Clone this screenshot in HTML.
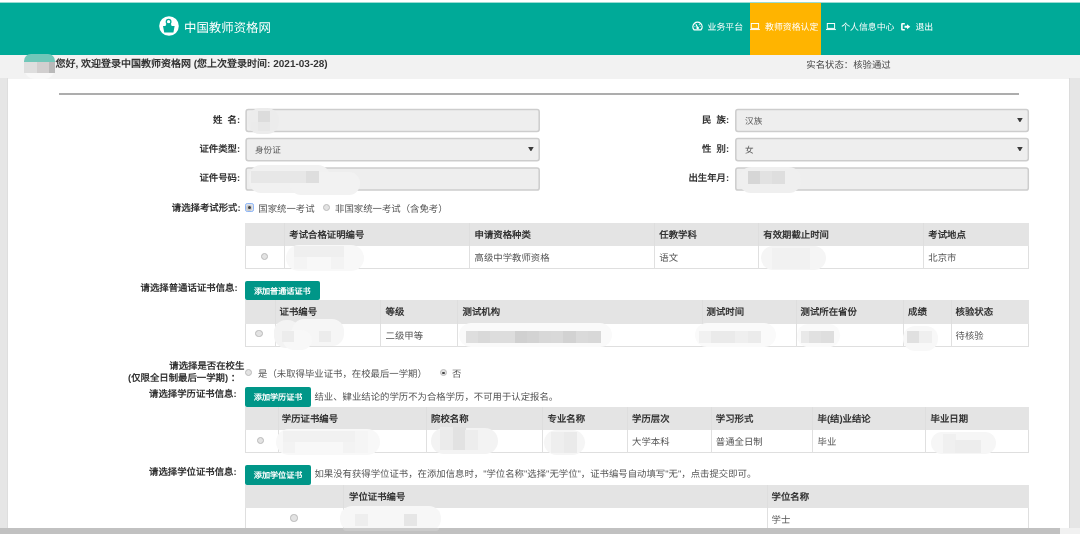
<!DOCTYPE html>
<html lang="zh-CN">
<head>
<meta charset="utf-8">
<title>中国教师资格网</title>
<style>
*{box-sizing:border-box;margin:0;padding:0}
html,body{width:1080px;height:534px;overflow:hidden;background:#fff}
body{position:relative;font-family:"Liberation Sans",sans-serif;font-size:9.4px;color:#333;line-height:1;text-rendering:geometricPrecision}
.abs{position:absolute}
#hdr{left:0;top:3px;width:1080px;height:52px;background:#00aa98}
#tab{left:750px;top:3px;width:71px;height:52px;background:#ffb400}
#sbar{left:0;top:55px;width:1080px;height:23.6px;background:#f2f2f2}
#lstrip{left:0;top:78px;width:8px;height:450px;background:#e6e6e6;border-right:1px solid #dedede}
#rstrip{left:1069.4px;top:78px;width:10.6px;height:450px;background:#e6e6e6;border-left:1px solid #dcdcdc}
#hr{left:59px;top:92.8px;width:960px;height:2.1px;background:#adadad}
#scroll{left:0;top:528px;width:1080px;height:6px;background:#f1f1f1}
#thumb{left:0;top:528px;width:1060px;height:6px;background:#c1c1c1}
.t{position:absolute;z-index:3;white-space:nowrap;text-align:justify;text-align-last:justify;line-height:12px;height:12px}
.b{font-weight:bold}
.w{color:#fff}
.nav{font-size:8.9px}
.lbl{font-weight:bold;color:#333}
.inp{position:absolute;height:23.3px;background:#eee;border:1px solid #ccc;border-radius:2px}
.g{color:#555}
.sm{font-size:8.6px;color:#555}
.arrow{position:absolute;width:0;height:0;border-left:3.1px solid transparent;border-right:3.1px solid transparent;border-top:4.8px solid #3a3a3a}
.btn{position:absolute;background:#009688;color:#fff;font-weight:bold;font-size:8.1px;text-align:center;border-radius:2px;overflow:hidden}
.th{position:absolute;background:#e4e4e4;height:23px}
.tr{position:absolute;background:#fff;height:23px;border:1px solid #dfdfdf;border-top:none}
.vl{position:absolute;width:1px;background:#e0e0e0}
.vh{position:absolute;width:1px;background:#dedede}
.rad{position:absolute;z-index:3;width:7.4px;height:7.4px;border-radius:50%;background:#e3e3e3;border:1px solid #bababa}
.rad.on:after{content:"";position:absolute;left:1.5px;top:1.5px;width:2.6px;height:2.6px;border-radius:50%;background:#444}
.mz{position:absolute}
.bl{position:absolute;background:#f6f6f6;border-radius:11px}
</style>
</head>
<body>
<div id="wrap" style="position:absolute;left:0;top:0;width:1080px;height:534px;will-change:transform">
<div class="abs" style="left:0;top:2px;width:1080px;height:1px;background:#9adcd3"></div>
<div id="hdr" class="abs"></div>
<div id="tab" class="abs"></div>
<div id="sbar" class="abs"></div>
<div id="lstrip" class="abs"></div>
<div id="rstrip" class="abs"></div>
<div id="hr" class="abs"></div>

<!-- logo -->
<svg class="abs" style="left:158.9px;top:15.6px" width="20" height="20" viewBox="0 0 20 20">
<circle cx="10" cy="10" r="9.8" fill="#fff"/>
<circle cx="9.6" cy="5.7" r="2.3" fill="none" stroke="#00aa98" stroke-width="1.3"/>
<path d="M6.6 10 C6.6 8 8 7.6 9.6 7.6 C11.2 7.6 12.6 8 12.6 10 Z" fill="#00aa98"/>
<path d="M4 9.9 H15.6 L14.4 16.6 H5.2 Z" fill="#00aa98"/>
</svg>
<div class="t w" style="left:184.09px;width:86.78px;top:20.9px;font-size:12.4px;line-height:14px;height:14px">中国教师资格网</div>

<!-- nav -->
<svg class="abs" style="left:691.5px;top:20.5px" width="11" height="11" viewBox="0 0 11 11">
<path d="M2.1 8.9 A4.6 4.6 0 1 1 8.9 8.9 Z" fill="none" stroke="#fff" stroke-width="1.3" stroke-linejoin="round"/>
<path d="M5.7 6.8 L3.9 3.3" stroke="#fff" stroke-width="1.2" fill="none"/>
<circle cx="5.7" cy="6.9" r="1.25" fill="#fff"/>
<circle cx="7.3" cy="3.6" r="0.55" fill="#fff"/>
<circle cx="2.9" cy="5.6" r="0.5" fill="#fff"/>
<circle cx="8.2" cy="5.6" r="0.5" fill="#fff"/>
</svg>
<div class="t w nav" style="left:707.50px;width:35.55px;top:21.4px">业务平台</div>

<svg class="abs" style="left:750px;top:23px" width="11" height="8" viewBox="0 0 11 8">
<rect x="1.3" y="0.5" width="7.3" height="4.9" fill="none" stroke="#fff" stroke-width="0.95"/>
<rect x="0" y="6.1" width="9.9" height="0.95" fill="#fff"/>
</svg>
<div class="t w nav" style="left:765.00px;width:53.30px;top:21.4px">教师资格认定</div>

<svg class="abs" style="left:825.5px;top:23px" width="11" height="8" viewBox="0 0 11 8">
<rect x="1.3" y="0.5" width="7.3" height="4.9" fill="none" stroke="#fff" stroke-width="0.95"/>
<rect x="0" y="6.1" width="9.9" height="0.95" fill="#fff"/>
</svg>
<div class="t w nav" style="left:841.19px;width:53.30px;top:21.4px">个人信息中心</div>

<svg class="abs" style="left:900.5px;top:22.7px" width="10" height="8" viewBox="0 0 10 8">
<path d="M3.8 0.8 H1.4 Q0.9 0.8 0.9 1.3 V6.2 Q0.9 6.7 1.4 6.7 H3.8" fill="none" stroke="#fff" stroke-width="1.6"/>
<path d="M3.5 2.75 H6 V1.2 L9.3 3.75 L6 6.3 V4.75 H3.5 Z" fill="#fff"/>
</svg>
<div class="t w nav" style="left:915.39px;width:17.80px;top:21.4px">退出</div>

<!-- status bar -->
<div class="bl" style="left:24.4px;top:60px;width:30.6px;height:18.5px;background:#f8f8f8;border-radius:0 0 11px 11px"></div>
<div class="mz" style="left:24.4px;top:53.8px;width:30.6px;height:8px;background:#70c7b9;border-radius:7px 7px 0 0"></div>
<div class="mz" style="left:24.4px;top:61.5px;width:12.6px;height:11.5px;background:#dedede"></div>
<div class="mz" style="left:37px;top:61.5px;width:12px;height:11.5px;background:#d1cfcf"></div>
<div class="mz" style="left:49px;top:61.5px;width:6px;height:11.5px;background:#b9b9b9"></div>
<div class="t b" style="left:55.39px;width:272.32px;top:58.6px;font-size:10px;color:#333">您好, 欢迎登录中国教师资格网 (您上次登录时间: 2021-03-28)</div>
<div class="t" style="left:806.30px;width:84.44px;top:59px;font-size:9.4px;color:#444">实名状态：核验通过</div>

<!-- form left -->
<svg class="abs" style="left:0;top:100px" width="1080" height="100" viewBox="0 100 1080 100">
<g fill="#eeeeee" stroke="#cdcdcd" stroke-width="1.5">
<rect x="246.1" y="109.5" width="293.1" height="22" rx="2.2"/>
<rect x="246.1" y="138.5" width="293.1" height="22.2" rx="2.2"/>
<rect x="246.1" y="168.1" width="293.1" height="22" rx="2.2"/>
<rect x="735.8" y="109.5" width="292.5" height="22" rx="2.2"/>
<rect x="735.8" y="138.5" width="292.5" height="22.2" rx="2.2"/>
<rect x="735.8" y="168.1" width="292.5" height="22" rx="2.2"/>
</g>
</svg>
<div class="t lbl" style="left:212.91px;width:27.14px;top:113.5px">姓&nbsp;&nbsp;名:</div>
<div class="t lbl" style="left:199.38px;width:40.67px;top:142.5px">证件类型:</div>
<div class="t sm" style="left:255.00px;width:25.85px;top:144px">身份证</div>
<svg class="abs" style="left:528.2px;top:146.65px;z-index:3" width="5.8" height="4.8" viewBox="0 0 5.8 4.8"><path d="M0.1 0.1 H5.7 L2.9 4.7 Z" fill="#3a3a3a"/></svg>
<div class="t lbl" style="left:199.38px;width:40.67px;top:171.5px">证件号码:</div>

<!-- form right -->
<div class="t lbl" style="left:701.91px;width:27.14px;top:113.5px">民&nbsp;&nbsp;族:</div>
<div class="t sm" style="left:745.00px;width:17.25px;top:115px">汉族</div>
<svg class="abs" style="left:1016.9px;top:117.65px;z-index:3" width="5.8" height="4.8" viewBox="0 0 5.8 4.8"><path d="M0.1 0.1 H5.7 L2.9 4.7 Z" fill="#3a3a3a"/></svg>
<div class="t lbl" style="left:701.91px;width:27.14px;top:142.5px">性&nbsp;&nbsp;别:</div>
<div class="t sm" style="left:745.00px;width:8.66px;top:144px">女</div>
<svg class="abs" style="left:1016.9px;top:146.65px;z-index:3" width="5.8" height="4.8" viewBox="0 0 5.8 4.8"><path d="M0.1 0.1 H5.7 L2.9 4.7 Z" fill="#3a3a3a"/></svg>
<div class="t lbl" style="left:688.38px;width:40.67px;top:171.5px">出生年月:</div>

<!-- exam type -->
<div class="t lbl" style="left:171.75px;width:68.80px;top:202px">请选择考试形式:</div>
<div class="abs" style="left:244.8px;top:203.2px;width:9.2px;height:9px;border:1.2px solid #8db5f6;border-radius:2.2px;background:#dfe3ea;z-index:3"></div>
<div class="abs" style="left:246.4px;top:204.7px;width:6px;height:6px;border-radius:50%;background:#c9c9c9;z-index:3"></div>
<div class="abs" style="left:247.7px;top:206px;width:3.4px;height:3.4px;border-radius:50%;background:#3c3c3c;z-index:3"></div>
<div class="t g" style="left:258.30px;width:56.32px;top:202.6px">国家统一考试</div>
<div class="rad" style="left:322.5px;top:203.5px"></div>
<div class="t g" style="left:335.00px;width:112.57px;top:202.5px">非国家统一考试（含免考）</div>

<!-- table 1 -->
<div class="th" style="left:245px;top:223px;width:783.5px"></div>
<div class="tr" style="left:245px;top:246px;width:783.5px"></div>
<div class="vh" style="left:284px;top:223px;height:23px"></div><div class="vl" style="left:284px;top:246px;height:23px"></div>
<div class="vh" style="left:469px;top:223px;height:23px"></div><div class="vl" style="left:469px;top:246px;height:23px"></div>
<div class="vh" style="left:654px;top:223px;height:23px"></div><div class="vl" style="left:654px;top:246px;height:23px"></div>
<div class="vh" style="left:758px;top:223px;height:23px"></div><div class="vl" style="left:758px;top:246px;height:23px"></div>
<div class="vh" style="left:923px;top:223px;height:23px"></div><div class="vl" style="left:923px;top:246px;height:23px"></div>
<div class="t b" style="left:289.30px;width:75.07px;top:229px">考试合格证明编号</div>
<div class="t b" style="left:474.50px;width:56.32px;top:229px">申请资格种类</div>
<div class="t b" style="left:659.30px;width:37.57px;top:229px">任教学科</div>
<div class="t b" style="left:763.30px;width:65.69px;top:229px">有效期截止时间</div>
<div class="t b" style="left:928.30px;width:37.57px;top:229px">考试地点</div>
<div class="rad" style="left:261px;top:252.5px"></div>
<div class="t g" style="left:474.50px;width:75.07px;top:252px">高级中学教师资格</div>
<div class="t g" style="left:659.30px;width:18.82px;top:252px">语文</div>
<div class="t g" style="left:928.30px;width:28.19px;top:252px">北京市</div>

<!-- putonghua -->
<div class="t lbl" style="left:140.62px;width:96.92px;top:281.5px">请选择普通话证书信息:</div>
<div class="btn" style="left:245px;top:281px;width:74.5px;height:19.4px;line-height:21.4px">添加普通话证书</div>
<div class="th" style="left:245px;top:300.4px;width:783.5px;height:23.6px"></div>
<div class="tr" style="left:245px;top:324px;width:783.5px"></div>
<div class="vh" style="left:274.5px;top:300.4px;height:23.6px"></div><div class="vl" style="left:274.5px;top:324px;height:23px"></div>
<div class="vh" style="left:380px;top:300.4px;height:23.6px"></div><div class="vl" style="left:380px;top:324px;height:23px"></div>
<div class="vh" style="left:457.2px;top:300.4px;height:23.6px"></div><div class="vl" style="left:457.2px;top:324px;height:23px"></div>
<div class="vh" style="left:701.5px;top:300.4px;height:23.6px"></div><div class="vl" style="left:701.5px;top:324px;height:23px"></div>
<div class="vh" style="left:795.5px;top:300.4px;height:23.6px"></div><div class="vl" style="left:795.5px;top:324px;height:23px"></div>
<div class="vh" style="left:903px;top:300.4px;height:23.6px"></div><div class="vl" style="left:903px;top:324px;height:23px"></div>
<div class="vh" style="left:950.5px;top:300.4px;height:23.6px"></div><div class="vl" style="left:950.5px;top:324px;height:23px"></div>
<div class="t b" style="left:279.50px;width:37.57px;top:306.4px">证书编号</div>
<div class="t b" style="left:385.50px;width:18.82px;top:306.4px">等级</div>
<div class="t b" style="left:462.50px;width:37.57px;top:306.4px">测试机构</div>
<div class="t b" style="left:706.50px;width:37.57px;top:306.4px">测试时间</div>
<div class="t b" style="left:800.50px;width:56.32px;top:306.4px">测试所在省份</div>
<div class="t b" style="left:908.00px;width:18.82px;top:306.4px">成绩</div>
<div class="t b" style="left:955.50px;width:37.57px;top:306.4px">核验状态</div>
<div class="rad" style="left:255.4px;top:329.6px"></div>
<div class="t g" style="left:385.50px;width:37.57px;top:329.8px">二级甲等</div>
<div class="t g" style="left:955.50px;width:28.19px;top:329.8px">待核验</div>

<!-- in school -->
<div class="t lbl" style="left:169.28px;width:75.07px;top:359.7px">请选择是否在校生</div>
<div class="t lbl" style="left:128.02px;width:112.03px;top:372.3px">(仅限全日制最后一学期) ：</div>
<div class="rad" style="left:244.8px;top:369px"></div>
<div class="t g" style="left:258.00px;width:168.82px;top:367.5px">是（未取得毕业证书，在校最后一学期）</div>
<div class="rad on" style="left:439.8px;top:369px"></div>
<div class="t g" style="left:452.00px;width:9.44px;top:367.5px">否</div>

<!-- xueli -->
<div class="t lbl" style="left:149.09px;width:87.55px;top:388.2px">请选择学历证书信息:</div>
<div class="btn" style="left:245px;top:387.2px;width:66.2px;height:20.1px;line-height:22px">添加学历证书</div>
<div class="t g" style="left:314.39px;width:243.82px;top:390.6px">结业、肄业结论的学历不为合格学历，不可用于认定报名。</div>
<div class="th" style="left:245px;top:407.3px;width:783.5px;height:22.9px"></div>
<div class="tr" style="left:245px;top:430.2px;width:783.5px;height:22.8px"></div>
<div class="vh" style="left:277.7px;top:407.3px;height:22.9px"></div><div class="vl" style="left:277.7px;top:430.2px;height:22.4px"></div>
<div class="vh" style="left:426px;top:407.3px;height:22.9px"></div><div class="vl" style="left:426px;top:430.2px;height:22.4px"></div>
<div class="vh" style="left:542.3px;top:407.3px;height:22.9px"></div><div class="vl" style="left:542.3px;top:430.2px;height:22.4px"></div>
<div class="vh" style="left:626.8px;top:407.3px;height:22.9px"></div><div class="vl" style="left:626.8px;top:430.2px;height:22.4px"></div>
<div class="vh" style="left:710.6px;top:407.3px;height:22.9px"></div><div class="vl" style="left:710.6px;top:430.2px;height:22.4px"></div>
<div class="vh" style="left:812.4px;top:407.3px;height:22.9px"></div><div class="vl" style="left:812.4px;top:430.2px;height:22.4px"></div>
<div class="vh" style="left:925.2px;top:407.3px;height:22.9px"></div><div class="vl" style="left:925.2px;top:430.2px;height:22.4px"></div>
<div class="t b" style="left:281.80px;width:56.32px;top:413.4px">学历证书编号</div>
<div class="t b" style="left:431.00px;width:37.57px;top:413.4px">院校名称</div>
<div class="t b" style="left:547.50px;width:37.57px;top:413.4px">专业名称</div>
<div class="t b" style="left:632.00px;width:37.57px;top:413.4px">学历层次</div>
<div class="t b" style="left:715.80px;width:37.57px;top:413.4px">学习形式</div>
<div class="t b" style="left:817.50px;width:53.17px;top:413.4px">毕(结)业结论</div>
<div class="t b" style="left:930.50px;width:37.57px;top:413.4px">毕业日期</div>
<div class="rad" style="left:257px;top:436.5px"></div>
<div class="t g" style="left:632.00px;width:37.57px;top:436.4px">大学本科</div>
<div class="t g" style="left:715.80px;width:46.94px;top:436.4px">普通全日制</div>
<div class="t g" style="left:817.50px;width:18.82px;top:436.4px">毕业</div>

<!-- xuewei -->
<div class="t lbl" style="left:149.09px;width:87.55px;top:466px">请选择学位证书信息:</div>
<div class="btn" style="left:245px;top:464.8px;width:66.2px;height:20.2px;line-height:22px">添加学位证书</div>
<div class="t g" style="left:314.39px;width:441.91px;top:468.2px">如果没有获得学位证书，在添加信息时，"学位名称"选择"无学位"，证书编号自动填写"无"，点击提交即可。</div>
<div class="th" style="left:245px;top:485px;width:783.5px;height:23px"></div>
<div class="tr" style="left:245px;top:508px;width:783.5px;height:23px"></div>
<div class="vh" style="left:343px;top:485px;height:23px"></div><div class="vl" style="left:343px;top:508px;height:20px"></div>
<div class="vh" style="left:766.5px;top:485px;height:23px"></div><div class="vl" style="left:766.5px;top:508px;height:20px"></div>
<div class="t b" style="left:349.00px;width:56.32px;top:490.5px">学位证书编号</div>
<div class="t b" style="left:771.50px;width:37.57px;top:490.5px">学位名称</div>
<div class="rad" style="left:290.4px;top:514.3px"></div>
<div class="t g" style="left:771.50px;width:18.82px;top:513.5px">学士</div>
<!-- smudges -->
<div class="bl" style="left:248px;top:107.5px;width:31px;height:26.5px;background:#ececec;border-radius:12px"></div>
<div class="mz" style="left:257.5px;top:111px;width:12.8px;height:10.5px;background:#dcdcdc"></div>
<div class="mz" style="left:257.5px;top:121.5px;width:12.8px;height:9.5px;background:#e7e7e7"></div>
<div class="mz" style="left:251px;top:121.5px;width:7.2px;height:9.5px;background:#ebebeb"></div>
<div class="bl" style="left:249px;top:164.8px;width:81px;height:28.2px;background:#f1f1f1;border-radius:12px"></div>
<div class="bl" style="left:290px;top:172px;width:70px;height:22.5px;background:#f2f2f2;border-radius:11px"></div>
<div class="mz" style="left:251px;top:171px;width:55.7px;height:12.3px;background:#e7e7e7"></div>
<div class="mz" style="left:306px;top:171px;width:13.0px;height:12.3px;background:#dedede"></div>
<div class="bl" style="left:739px;top:166.8px;width:62px;height:26.2px;background:#efefef;border-radius:12px"></div>
<div class="mz" style="left:747.5px;top:171.2px;width:12.9px;height:12.5px;background:#d6d6d6"></div>
<div class="mz" style="left:759.7px;top:171.2px;width:12.9px;height:12.5px;background:#e2e2e2"></div>
<div class="mz" style="left:771.9px;top:171.2px;width:12.8px;height:12.5px;background:#dedede"></div>
<div class="bl" style="left:285.6px;top:244.6px;width:78.1px;height:26.0px;background:#f8f8f8;border-radius:13px"></div>
<div class="mz" style="left:294.4px;top:246.3px;width:49.3px;height:10.7px;background:#efefef"></div>
<div class="mz" style="left:294.4px;top:257px;width:12.7px;height:11.5px;background:#f4f4f4"></div>
<div class="mz" style="left:331px;top:257px;width:12.7px;height:11.5px;background:#f3f3f3"></div>
<div class="bl" style="left:760.6px;top:246px;width:65.0px;height:24px;background:#f5f5f5;border-radius:13px"></div>
<div class="mz" style="left:772px;top:248px;width:37.7px;height:20.5px;background:#f1f1f1"></div>
<div class="bl" style="left:273.7px;top:319.6px;width:26.3px;height:28.4px;background:#f3f3f3;border-radius:12px"></div>
<div class="bl" style="left:292px;top:319.4px;width:52.4px;height:26.6px;background:#f6f6f6;border-radius:12px"></div>
<div class="bl" style="left:283px;top:330px;width:29px;height:20px;background:#f8f8f8;border-radius:10px"></div>
<div class="mz" style="left:281.9px;top:330.6px;width:12.5px;height:11.9px;background:#ececec"></div>
<div class="mz" style="left:318.7px;top:330.6px;width:12.6px;height:11.9px;background:#ececec"></div>
<div class="bl" style="left:459px;top:322.5px;width:153px;height:24.1px;background:#fafafa;border-radius:12px"></div>
<div class="mz" style="left:465.7px;top:330.6px;width:13.0px;height:12.2px;background:#dedede"></div>
<div class="mz" style="left:478px;top:330.6px;width:12.7px;height:12.2px;background:#d9d9d9"></div>
<div class="mz" style="left:490px;top:330.6px;width:13.0px;height:12.2px;background:#dddddd"></div>
<div class="mz" style="left:502.3px;top:330.6px;width:12.9px;height:12.2px;background:#dddddd"></div>
<div class="mz" style="left:514.5px;top:330.6px;width:12.9px;height:12.2px;background:#d0d0d0"></div>
<div class="mz" style="left:526.7px;top:330.6px;width:13.0px;height:12.2px;background:#d3d3d3"></div>
<div class="mz" style="left:539px;top:330.6px;width:12.9px;height:12.2px;background:#d8d8d8"></div>
<div class="mz" style="left:551.2px;top:330.6px;width:12.9px;height:12.2px;background:#d9d9d9"></div>
<div class="mz" style="left:563.4px;top:330.6px;width:12.9px;height:12.2px;background:#d2d2d2"></div>
<div class="mz" style="left:575.6px;top:330.6px;width:13.0px;height:12.2px;background:#dadada"></div>
<div class="mz" style="left:587.9px;top:330.6px;width:13.1px;height:12.2px;background:#d8d8d8"></div>
<div class="bl" style="left:695px;top:322.5px;width:81px;height:24.5px;background:#fafafa;border-radius:12px"></div>
<div class="mz" style="left:699px;top:330.6px;width:12.7px;height:12.4px;background:#f1f1f1"></div>
<div class="mz" style="left:711px;top:330.6px;width:24.7px;height:12.4px;background:#eaeaea"></div>
<div class="mz" style="left:735px;top:330.6px;width:13.2px;height:12.4px;background:#efefef"></div>
<div class="mz" style="left:747.5px;top:330.6px;width:13.2px;height:12.4px;background:#ebebeb"></div>
<div class="bl" style="left:797px;top:323.5px;width:43px;height:23.5px;background:#fafafa;border-radius:12px"></div>
<div class="mz" style="left:800.6px;top:330.6px;width:9.1px;height:12.4px;background:#e9e9e9"></div>
<div class="mz" style="left:809px;top:330.6px;width:12.7px;height:12.4px;background:#e1e1e1"></div>
<div class="mz" style="left:821px;top:330.6px;width:12.9px;height:12.4px;background:#dedede"></div>
<div class="bl" style="left:903px;top:326px;width:35px;height:25px;background:#f8f8f8;border-radius:12px"></div>
<div class="mz" style="left:907px;top:330.6px;width:12.7px;height:12.4px;background:#e0e0e0"></div>
<div class="mz" style="left:919px;top:330.6px;width:12.7px;height:12.4px;background:#efefef"></div>
<div class="bl" style="left:276px;top:429px;width:104px;height:26px;background:#f8f8f8;border-radius:13px"></div>
<div class="mz" style="left:282.5px;top:431px;width:73.2px;height:10.5px;background:#f1f1f1"></div>
<div class="mz" style="left:282.5px;top:441.5px;width:12.2px;height:11.0px;background:#f3f3f3"></div>
<div class="mz" style="left:343px;top:441.5px;width:12.7px;height:11.0px;background:#f3f3f3"></div>
<div class="mz" style="left:355px;top:431px;width:12.7px;height:21.5px;background:#f5f5f5"></div>
<div class="bl" style="left:431px;top:427.5px;width:66.5px;height:26.0px;background:#f3f3f3;border-radius:13px"></div>
<div class="mz" style="left:440px;top:427px;width:13.2px;height:23px;background:#ebebeb"></div>
<div class="mz" style="left:452.5px;top:426.5px;width:13.2px;height:23.5px;background:#e2e2e2"></div>
<div class="mz" style="left:465px;top:430px;width:12.7px;height:20px;background:#ededed"></div>
<div class="bl" style="left:543.7px;top:430px;width:41.3px;height:25px;background:#f5f5f5;border-radius:13px"></div>
<div class="mz" style="left:551px;top:432px;width:13.2px;height:21px;background:#eeeeee"></div>
<div class="mz" style="left:563.5px;top:432px;width:13.2px;height:21px;background:#eaeaea"></div>
<div class="bl" style="left:931px;top:431.5px;width:65px;height:22.5px;background:#f6f6f6;border-radius:12px"></div>
<div class="mz" style="left:943px;top:434px;width:12.7px;height:18.5px;background:#f0f0f0"></div>
<div class="mz" style="left:955px;top:440px;width:25.7px;height:12.5px;background:#ededed"></div>
<div class="bl" style="left:340px;top:506px;width:101px;height:24.5px;background:#f7f7f7;border-radius:12px"></div>
<div class="mz" style="left:355px;top:514px;width:13.2px;height:12px;background:#eeeeee"></div>
<div class="mz" style="left:403.7px;top:514px;width:13.0px;height:12px;background:#e6e6e6"></div>
<div id="scroll" class="abs"></div>
<div id="thumb" class="abs"></div>
<div class="abs" style="left:343px;top:528px;width:96px;height:3.2px;background:#cbcbcb;border-radius:0 0 8px 8px"></div>
</div>
</body>
</html>
